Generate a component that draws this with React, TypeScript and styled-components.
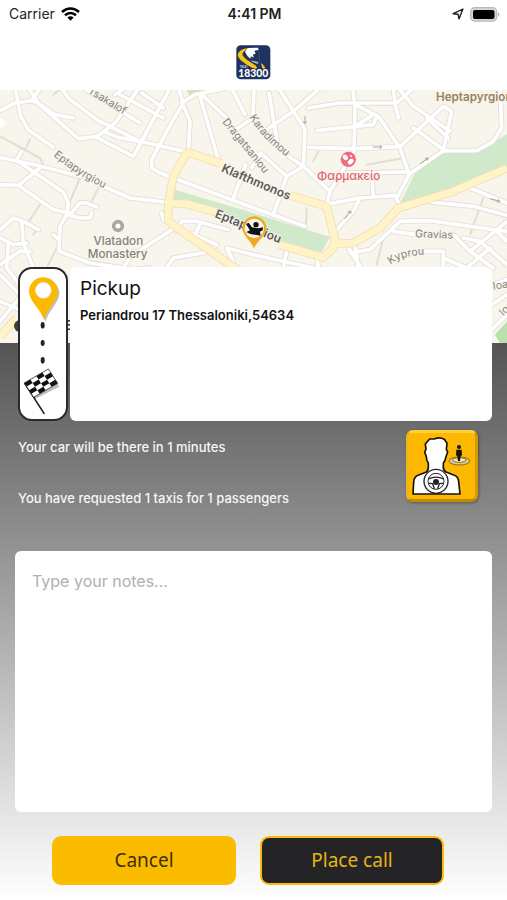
import React from "react";
import styled, { createGlobalStyle } from "styled-components";

const GlobalStyle = createGlobalStyle`
  * { box-sizing: border-box; }
  body {
    margin: 0;
    font-family: Inter, "Liberation Sans", sans-serif;
    color: #111;
    background: #fff;
  }
`;

const Page = styled.main`
  display: flex;
  flex-direction: column;
  min-height: 100vh;
`;

const StatusBar = styled.header`
  display: grid;
  grid-template-columns: 1fr auto 1fr;
  align-items: center;
  height: 28px;
  padding: 0 7px 0 9px;
  font-size: 14px;
  line-height: 20px;
  color: #222;
`;

const StatusGroup = styled.div<{ $end?: boolean }>`
  display: flex;
  align-items: center;
  justify-content: ${(p) => (p.$end ? "flex-end" : "flex-start")};
  gap: 6px;
`;

const Clock = styled.time`
  font-weight: 600;
`;

const Brand = styled.div`
  display: flex;
  justify-content: center;
  padding: 17px 0 10px;
`;

const MapFrame = styled.div`
  height: 253px;
  overflow: hidden;
  background: #f8f5ed;

  svg {
    display: block;
    width: 100%;
    height: 100%;
  }
`;

const Panel = styled.section`
  flex: 1;
  display: flex;
  flex-direction: column;
  background: linear-gradient(#545454, #fff);
`;

const Trip = styled.div`
  display: grid;
  grid-template-columns: 50px 1fr;
  gap: 2px;
  height: 154px;
  margin: -76px 15px 0 18px;
`;

const RouteCard = styled.div`
  border: 2px solid #2b2b2b;
  border-radius: 14px;
  background: #fff;

  svg {
    display: block;
  }
`;

const AddressCard = styled.div`
  padding: 10px;
  border-radius: 6px;
  background: #fff;
`;

const AddressTitle = styled.h1`
  margin: 0;
  font-size: 19px;
  line-height: 24px;
  font-weight: 400;
`;

const Address = styled.p`
  margin: 6px 0 0;
  font-size: 13px;
  line-height: 16px;
  font-weight: 500;
  font-weight: 600;
`;

const Summary = styled.div`
  display: flex;
  justify-content: space-between;
  align-items: flex-start;
  padding: 9px 29px 0 18px;
`;

const SummaryText = styled.div`
  display: grid;
  gap: 35px;
  padding-top: 9px;
  font-size: 13px;
  line-height: 16px;
  font-weight: 500;
  color: #f6f6f6;

  p {
    margin: 0;
  }
`;

const DriverButton = styled.button`
  width: 72px;
  height: 72px;
  padding: 0;
  border: 3px solid;
  border-color: #ffcf3c #d79800 #c68a00 #efb51a;
  border-radius: 7px;
  background: #fcb900;
  box-shadow: 1px 1px 3px rgba(0, 0, 0, 0.35);

  svg {
    display: block;
  }
`;

const Notes = styled.textarea`
  flex: 1;
  display: block;
  min-height: 120px;
  margin: 45px 15px 0;
  padding: 18px 17px;
  border: 0;
  border-radius: 6px;
  outline: 0;
  resize: none;
  background: #fff;
  font: 400 16px/24px Inter, sans-serif;
  color: #222;

  &::placeholder {
    color: #b0b0b0;
    opacity: 1;
  }
`;

const Actions = styled.div`
  display: grid;
  grid-template-columns: 1fr 1fr;
  gap: 24px;
  padding: 24px 63px 15px 52px;
`;

const ActionButton = styled.button<{ $dark?: boolean }>`
  height: 49px;
  padding: 0 0 2px;
  border: 2px solid #fbbc05;
  border-radius: 9px;
  background: ${(p) => (p.$dark ? "#242426" : "#fbbc00")};
  color: ${(p) => (p.$dark ? "#e8b413" : "#3b2f06")};
  font: 400 19px/24px "Noto Sans", "Open Sans", sans-serif;
`;

/* Map geometry: three drawing units per CSS pixel. */
const streets = [
  "M0 68 L45 45 L95 38 L112 44 L235 152 L290 146 L345 105 L420 -5",
  "M45 0 L55 50 L62 85 L85 125 L160 178",
  "M95 38 L120 0", "M85 0 L115 45 L165 80 L220 90",
  "M185 0 L205 30 L290 95 L420 160 L560 192",
  "M260 5 L420 105", "M360 20 L490 90", "M345 20 L375 0",
  "M505 10 L400 205 L290 148", "M310 130 L355 148 L420 160",
  "M425 15 L490 60", "M535 0 L550 45 L520 95 L455 215 L455 240 L480 255 L762 360 L915 415",
  "M545 40 L570 100 L565 195", "M545 45 L585 20 L680 0",
  "M600 25 L655 215", "M605 20 L680 90", "M695 0 L735 80", "M700 130 L759 90 L762 0",
  "M310 295 L390 330 L500 343", "M0 208 L110 232 L240 265", "M65 190 L50 215",
  "M0 290 L55 292 L120 240", "M55 220 L105 255 L190 312 L205 345 L200 380 L180 415 L177 490 L270 525 L400 545 L450 540",
  "M55 292 L160 365 L210 375", "M200 380 L240 390 L270 390 L275 375",
  "M210 380 L240 345 L260 345 L290 357", "M0 425 L40 390 L70 400 L115 425",
  "M65 400 L70 465 L100 540 L120 600", "M0 450 L40 470 L80 465", "M0 530 L60 490 L90 490",
  "M25 465 L20 540 L75 610 L0 700", "M160 440 L177 455", "M0 560 L60 620 L200 700", "M0 640 L70 670 L100 730",
  "M485 375 L490 395 L510 405", "M400 490 L370 540", "M400 500 L515 425",
  "M530 430 L545 400 L590 400 L685 425", "M570 435 L650 470", "M600 410 L585 440",
  "M500 540 L520 510 L650 488", "M680 480 L760 500 L940 540", "M680 480 L700 520",
  "M737 230 L700 330", "M755 240 L782 195", "M960 0 L880 70 L800 125",
  "M807 15 L835 180", "M835 0 L900 100 L915 125 L910 235",
  "M925 60 L1020 45 L1190 45 L1240 0", "M1058 0 L1065 60 L1062 190", "M1180 0 L1185 45 L1195 90",
  "M1065 50 L1135 85 L1200 180 L1228 260 L1190 330", "M950 128 L1120 110 L1130 85", "M1065 115 L1120 80",
  "M925 178 L1060 182 L1200 176 L1330 55 L1355 70 L1330 188",
  "M1195 0 L1240 55 L1350 130", "M1240 120 L1335 188", "M1280 90 L1345 150",
  "M1500 0 L1505 120 L1480 160 L1430 188 L1330 188 L1225 260",
  "M865 205 L910 235 L990 310 L980 350", "M782 195 L860 265 L910 235", "M860 265 L820 380",
  "M975 350 L1080 330 L1185 322 L1200 355", "M1062 190 L990 310", "M1040 255 L1225 252", "M1115 255 L1120 325",
  "M1080 330 L1060 370 L1010 425",
  "M1290 342 L1420 355 L1521 382", "M1410 300 L1521 345", "M1040 470 L1080 535",
  "M1050 495 L1110 485 L1200 400 L1290 398 L1410 415 L1521 430",
  "M1180 430 L1250 440", "M1360 440 L1410 490 L1480 540", "M1410 490 L1521 400", "M1490 430 L1521 460",
  "M1390 450 L1440 460 L1521 530", "M1270 490 L1330 490 L1330 540", "M1330 510 L1400 540 L1470 480",
  "M1480 590 L1521 575", "M1475 650 L1521 620", "M1475 725 L1521 680",
  "M860 490 L850 540", "M950 505 L955 540", "M1065 470 L1075 540",
];

const lanes = [
  "M0 145 L120 210 L130 230", "M90 155 L75 185", "M240 270 L210 340", "M295 300 L275 340",
  "M80 410 L120 350", "M170 480 L140 540", "M100 440 L115 420", "M160 20 L185 0",
  "M920 360 L918 410", "M1100 230 L1200 212", "M1450 330 L1410 440", "M940 220 L955 190", "M1150 450 L1130 530",
];

const mainRoads = [
  "M560 192 L665 227",
  "M870 322 L980 355 L1005 455 L1000 480 L970 508 L838 470",
  "M572 190 L560 195 L520 265 L505 345 L505 400 L560 440 L720 550",
  "M505 345 L560 348 L650 372",
  "M1005 468 L1060 465 L1140 420 L1195 360 L1360 310 L1521 240",
  "M0 745 L50 690",
];

function Roads({ paths, color, width, cap = "round" }: { paths: string[]; color: string; width: number; cap?: "round" | "butt" }) {
  return (
    <g fill="none" stroke={color} strokeWidth={width} strokeLinecap={cap} strokeLinejoin="round">
      {paths.map((d) => (
        <path key={d} d={d} />
      ))}
    </g>
  );
}

function CityMap() {
  return (
    <svg viewBox="0 6 1521 759" preserveAspectRatio="xMidYMid slice" role="img" aria-label="Map of the pickup area">
      <defs>
        <path id="upper-eptapyrgiou" d="M160 203 Q230 262 330 310" />
        <path id="karadimou" d="M748 88 Q790 160 880 220" />
        <path id="kyprou" d="M1172 530 Q1210 498 1300 500" />
      </defs>
      <rect y="6" width="1521" height="759" fill="#f8f5ed" />
      <path d="M1201 345 L1245 255 L1330 195 L1430 195 L1521 138 V240 L1360 310Z" fill="#d1e9cb" />
      <path d="M525 305 L760 375 L990 447 L965 492 L840 465 L650 365 L520 335Z" fill="#d1e9cb" />
      <path d="M560 6 H615 L570 25Z" fill="#d1e3bd" />
      <path d="M1485 740 L1521 700 V765 H1500Z" fill="#b8e2ac" />
      <Roads paths={lanes} color="#e2ded4" width={6} />
      <Roads paths={streets} color="#e1ded8" width={16} />
      <Roads paths={streets} color="#ffffff" width={11} />
      <Roads paths={mainRoads} color="#f7dcb2" width={26} cap="butt" />
      <Roads paths={mainRoads} color="#fff3c8" width={21} cap="butt" />
      <circle cx="0" cy="105" r="14" fill="#fff" />

      <g fill="none" stroke="#a5a39f" strokeWidth="3">
        <path d="M1118 177 h28 m-7 -5 l7 5 l-7 5 M1260 228 l24 -18 m-9 1 l9 -1 l-2 8 M1034 393 l18 -24 m-9 3 l9 -3 l1 9 M1470 332 l30 8 m-7 -7 l7 7 l-9 3 M915 85 v22 m-5 -7 l5 7 l5 -7" />
      </g>

      <g fontFamily="Inter, sans-serif" fontSize="32" fill="#85827e" stroke="#f8f5ed" strokeWidth="5" paintOrder="stroke">
        <text transform="translate(262 14) rotate(31)">Tsakalof</text>
        <text><textPath href="#upper-eptapyrgiou">Eptapyrgiou</textPath></text>
        <text transform="translate(666 102) rotate(51)">Dragatsaniou</text>
        <text><textPath href="#karadimou">Karadimou</textPath></text>
        <text transform="translate(1245 448) rotate(2)">Gravias</text>
        <text><textPath href="#kyprou">Kyprou</textPath></text>
        <text transform="translate(1480 605) rotate(-8)">Ioanni</text>
        <text transform="translate(1510 685) rotate(-45)">Io</text>
        <g fontWeight="500" fontSize="35">
          <text x="355" y="472" textAnchor="middle">Vlatadon</text>
          <text x="353" y="509" textAnchor="middle">Monastery</text>
        </g>
        <text x="1308" y="39" fontSize="35" fontWeight="600" fill="#9a8460">Heptapyrgion</text>
        <text x="1046" y="277" textAnchor="middle" fontSize="35" fontWeight="500" fill="#e0626f">Φαρμακείο</text>
        <g fontWeight="600" fill="#5c5957">
          <text transform="translate(662 250) rotate(23)" fontSize="36">Klafthmonos</text>
          <text transform="translate(643 387) rotate(22)" fontSize="36">Eptapyrgiou</text>
        </g>
      </g>

      <circle cx="354" cy="414" r="13" fill="#fff" stroke="#aaa8a3" strokeWidth="11" />
      <circle cx="1045" cy="214" r="23" fill="#ee6d7b" />
      <g fill="#fff">
        <ellipse cx="1036" cy="208" rx="9" ry="7" transform="rotate(45 1036 208)" />
        <ellipse cx="1052" cy="221" rx="7" ry="10" transform="rotate(45 1052 221)" />
        <circle cx="1053" cy="204" r="3" />
      </g>
      <circle cx="60" cy="714" r="18" fill="#3e4039" />
      <text x="193" y="725" fontFamily="Inter, sans-serif" fontSize="38" fontWeight="700" fill="#333">E</text>

      <path d="M762 481 C752 457 727 442 727 421 A36 36 0 0 1 799 421 C799 442 773 457 762 481Z" fill="#f2a922" />
      <circle cx="763" cy="421" r="29" fill="#f8f5ed" />
      <circle cx="768" cy="410" r="8" fill="#111" />
      <path d="M738 408 L746 404 L756 418 L775 421 L789 418 L788 427 L780 431 L782 443 L751 438 L739 432 L750 427Z" fill="#111" />
    </svg>
  );
}

function WifiIcon() {
  return (
    <svg width="19" height="14" viewBox="0 0 19 14" aria-hidden="true">
      <g fill="none" stroke="#000" strokeWidth="2.6">
        <path d="M1 5 C6 .4 13 .4 18 5" />
        <path d="M4 8.3 C7.3 5.3 11.7 5.3 15 8.3" />
      </g>
      <path d="M6.4 10.6 Q9.5 8 12.6 10.6 L9.5 13.8Z" />
    </svg>
  );
}

function LocationIcon() {
  return (
    <svg width="12" height="12" viewBox="0 0 11 11" aria-hidden="true">
      <path d="M1 5.2 L10 1 L6.4 10 L5.6 5.8Z" fill="none" stroke="#222" strokeWidth="1.3" strokeLinejoin="round" />
    </svg>
  );
}

function BatteryIcon() {
  return (
    <svg width="30" height="15" viewBox="0 0 30 15" aria-hidden="true">
      <rect x=".7" y=".7" width="26" height="13.4" rx="4" fill="#d6d6d6" stroke="#b8b8b8" strokeWidth="1.2" />
      <rect x="3" y="3" width="21.5" height="9" rx="2" fill="#000" />
      <path d="M28 5 Q31 7.4 28 10Z" fill="#b8b8b8" />
    </svg>
  );
}

function TaxiLogo() {
  return (
    <svg width="35" height="35" viewBox="0 0 105 105" role="img" aria-label="Taxi 18300">
      <rect x="1" y="1" width="102" height="102" rx="13" fill="#203260" />
      <path d="M40 10 C20 8 0 22 7 36 C14 49 32 58 50 70 L60 62 C46 54 26 42 20 31 C17 23 26 16 40 10Z" fill="#f9c514" />
      <path d="M27 20 L36 9 L66 8 L68 15 L55 17 L59 27 L51 28 L53 38 L45 34 L43 41 L35 34 L31 28Z" fill="#fff" />
      <path d="M44 46 L67 51 L66 57 L51 52Z" fill="#a9b4ce" />
      <path d="M69 20 L71 48 L84 66" fill="none" stroke="#6d7da5" strokeWidth="2" strokeDasharray="3 3" />
      <path d="M50 64 L61 70 M77 58 L85 70" stroke="#f9c514" strokeWidth="5" />
      <circle cx="58" cy="67" r="4" fill="#f9c514" />
      <circle cx="82" cy="67" r="4" fill="#f9c514" />
      <text x="11" y="69" fontFamily="Inter, sans-serif" fontSize="10" fontWeight="700" fill="#c9d0e0">TAXI</text>
      <text x="52" y="97" textAnchor="middle" fontFamily="Lato, sans-serif" fontSize="31" fontWeight="900" fill="#fff">18300</text>
    </svg>
  );
}

function RouteIcon() {
  return (
    <svg width="46" height="150" viewBox="0 0 138 450" aria-hidden="true">
      <g transform="translate(5 5)" opacity=".25">
        <path d="M72 154 C65 122 27 97 27 68 A43 43 0 0 1 113 68 C113 97 78 122 72 154Z" />
        <path d="M13 342 L85 300 L113 348 L40 385Z" />
      </g>
      <path d="M72 154 C65 122 27 97 27 68 A43 43 0 0 1 113 68 C113 97 78 122 72 154Z" fill="#fcb900" />
      <circle cx="70" cy="64" r="24" fill="#fff" stroke="#ddd" strokeWidth="2" />
      <g fill="#222">
        <ellipse cx="68" cy="169" rx="6" ry="10" />
        <ellipse cx="68" cy="222" rx="6" ry="9" />
        <ellipse cx="68" cy="274" rx="6" ry="10" />
      </g>
      <path d="M14 343 L72 433" stroke="#222" strokeWidth="5" strokeLinecap="round" />
      <g transform="matrix(18 -10.5 7 10.75 13 342)">
        <rect width="4" height="4" fill="#fff" />
        {[0, 1, 2, 3].flatMap((r) =>
          [0, 1, 2, 3]
            .filter((c) => (r + c) % 2 === 0)
            .map((c) => <rect key={`${r}-${c}`} x={c} y={r} width="1" height="1" fill="#111" />),
        )}
        <rect width="4" height="4" fill="none" stroke="#222" strokeWidth=".12" />
      </g>
    </svg>
  );
}

function DriverIcon() {
  return (
    <svg width="66" height="66" viewBox="0 0 198 198" aria-hidden="true">
      <path
        d="M12 183 L14 147 Q15 130 29 126 L52 117 Q59 112 58 100 V91 Q52 82 52 71 L47 57 L51 49 L49 33 L62 18 H76 Q91 11 106 19 L114 31 L112 49 L116 57 L111 71 Q109 83 103 91 V101 Q102 112 111 117 L134 126 Q148 130 149 146 L153 183Z"
        fill="#fff" stroke="#171304" strokeWidth="5" strokeLinejoin="round"
      />
      <g fill="none" stroke="#222" strokeWidth="4">
        <circle cx="81" cy="145" r="36" fill="#fff" />
        <circle cx="81" cy="145" r="24" strokeWidth="3" />
        <path d="M58 138 Q81 127 104 138 M60 151 L71 152 L76 167 M102 151 L91 152 L86 167" />
      </g>
      <circle cx="81" cy="147" r="9" fill="#222" />
      <g fill="none" stroke="#8b6b16">
        <ellipse cx="151" cy="84" rx="31" ry="12" fill="#d9c994" strokeWidth="3" />
        <ellipse cx="151" cy="81" rx="20" ry="7" fill="#f5e8bd" strokeWidth="3" />
      </g>
      <circle cx="150" cy="42" r="6" fill="#171304" />
      <path d="M142 50 H158 L159 67 L155 69 L153 84 H147 L145 69 L141 67Z" fill="#171304" />
    </svg>
  );
}

export default function App() {
  return (
    <>
      <GlobalStyle />
      <Page>
        <StatusBar>
          <StatusGroup>
            <span>Carrier</span>
            <WifiIcon />
          </StatusGroup>
          <Clock>4:41 PM</Clock>
          <StatusGroup $end>
            <LocationIcon />
            <BatteryIcon />
          </StatusGroup>
        </StatusBar>
        <Brand>
          <TaxiLogo />
        </Brand>
        <MapFrame>
          <CityMap />
        </MapFrame>
        <Panel>
          <Trip>
            <RouteCard>
              <RouteIcon />
            </RouteCard>
            <AddressCard>
              <AddressTitle>Pickup</AddressTitle>
              <Address>Periandrou 17 Thessaloniki,54634</Address>
            </AddressCard>
          </Trip>
          <Summary>
            <SummaryText>
              <p>Your car will be there in 1 minutes</p>
              <p>You have requested 1 taxis for 1 passengers</p>
            </SummaryText>
            <DriverButton type="button" aria-label="Driver pickup options">
              <DriverIcon />
            </DriverButton>
          </Summary>
          <Notes aria-label="Notes" placeholder="Type your notes..." />
          <Actions>
            <ActionButton type="button">Cancel</ActionButton>
            <ActionButton type="button" $dark>
              Place call
            </ActionButton>
          </Actions>
        </Panel>
      </Page>
    </>
  );
}
